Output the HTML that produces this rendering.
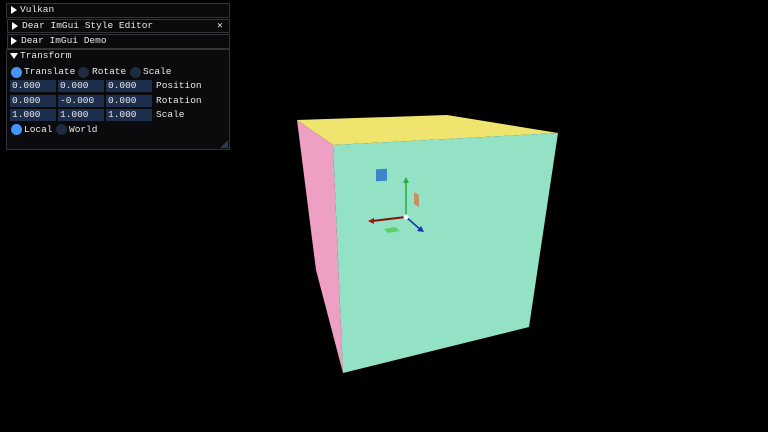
<!DOCTYPE html><html><head><style>
body{margin:0;width:768px;height:432px;background:#000;position:relative;overflow:hidden;font-family:"Liberation Mono",monospace;font-size:9.5px;color:#e6e6e6}
.a{position:absolute}
.t{position:absolute;background:#0a0a0a;border:1px solid #33333a;box-sizing:border-box}
.tx{position:absolute;line-height:12px;white-space:pre}
.tri{position:absolute;width:0;height:0}
.in{position:absolute;height:12px;width:46px;background:#1d2f4d;line-height:12px;padding-left:2px;box-sizing:border-box}
.rd{position:absolute;width:11px;height:11px;border-radius:50%;background:#1e2b40}
</style></head><body>
<svg class="a" style="left:0;top:0" width="768" height="432">
<polygon points="297,120 447,115 558,133 333,145" fill="#efe46e"/>
<polygon points="297,120 333,145 343,373 316,270" fill="#ee9fc4"/>
<polygon points="333,145 558,133 529,327 343,373" fill="#93e2c6"/>
<rect x="376" y="189" width="11" height="12" fill="#3c86c8" transform="skewY(-3)"/>
<polygon points="414,192 419,195 419,207 414,204" fill="#c8906a"/>
<polygon points="384,229 395,227 400,231 388,233" fill="#5ed06a"/>
<line x1="406" y1="217" x2="406" y2="180" stroke="#22b040" stroke-width="1.5"/>
<polygon points="406,177 403,183 409,183" fill="#22b040"/>
<line x1="406" y1="217" x2="372" y2="221" stroke="#8a1010" stroke-width="2"/>
<polygon points="368,221 374,218 374,224" fill="#b01010"/>
<line x1="406" y1="217" x2="421" y2="230" stroke="#1830a0" stroke-width="1.5"/>
<polygon points="424,232 417,231 421,226" fill="#1830a0"/>
<circle cx="406" cy="217" r="2.5" fill="#fff"/>
</svg>
<div class="t" style="left:6px;top:3px;width:224px;height:15px"></div>
<div class="tri" style="left:11px;top:6px;border-left:6px solid #fff;border-top:4px solid transparent;border-bottom:4px solid transparent"></div>
<div class="tx" style="left:20px;top:4px">Vulkan</div>
<div class="t" style="left:7px;top:19px;width:223px;height:14px"></div>
<div class="tri" style="left:12px;top:22px;border-left:6px solid #fff;border-top:4px solid transparent;border-bottom:4px solid transparent"></div>
<div class="tx" style="left:22px;top:20px">Dear ImGui Style Editor</div>
<div class="tx" style="left:217px;top:20px">✕</div>
<div class="t" style="left:7px;top:34px;width:223px;height:15px"></div>
<div class="tri" style="left:11px;top:37px;border-left:6px solid #fff;border-top:4px solid transparent;border-bottom:4px solid transparent"></div>
<div class="tx" style="left:21px;top:35px">Dear ImGui Demo</div>
<div class="t" style="left:6px;top:49px;width:224px;height:101px;background:#0b0b0e"></div>
<div class="tri" style="left:10px;top:53px;border-top:6px solid #fff;border-left:4px solid transparent;border-right:4px solid transparent"></div>
<div class="tx" style="left:20px;top:50px">Transform</div>
<div class="rd" style="left:11px;top:67px;background:#4296fa"></div>
<div class="tx" style="left:24px;top:66px">Translate</div>
<div class="rd" style="left:78px;top:67px"></div>
<div class="tx" style="left:92px;top:66px">Rotate</div>
<div class="rd" style="left:130px;top:67px"></div>
<div class="tx" style="left:143px;top:66px">Scale</div>
<div class="in" style="left:10px;top:80px">0.000</div><div class="in" style="left:58px;top:80px">0.000</div><div class="in" style="left:106px;top:80px">0.000</div><div class="tx" style="left:156px;top:80px">Position</div>
<div class="in" style="left:10px;top:95px">0.000</div><div class="in" style="left:58px;top:95px">-0.000</div><div class="in" style="left:106px;top:95px">0.000</div><div class="tx" style="left:156px;top:95px">Rotation</div>
<div class="in" style="left:10px;top:109px">1.000</div><div class="in" style="left:58px;top:109px">1.000</div><div class="in" style="left:106px;top:109px">1.000</div><div class="tx" style="left:156px;top:109px">Scale</div>
<div class="rd" style="left:11px;top:124px;background:#4296fa"></div>
<div class="tx" style="left:24px;top:124px">Local</div>
<div class="rd" style="left:56px;top:124px"></div>
<div class="tx" style="left:69px;top:124px">World</div>
<div class="tri" style="left:220px;top:140px;border-bottom:8px solid #2a3850;border-left:8px solid transparent"></div>
</body></html>
